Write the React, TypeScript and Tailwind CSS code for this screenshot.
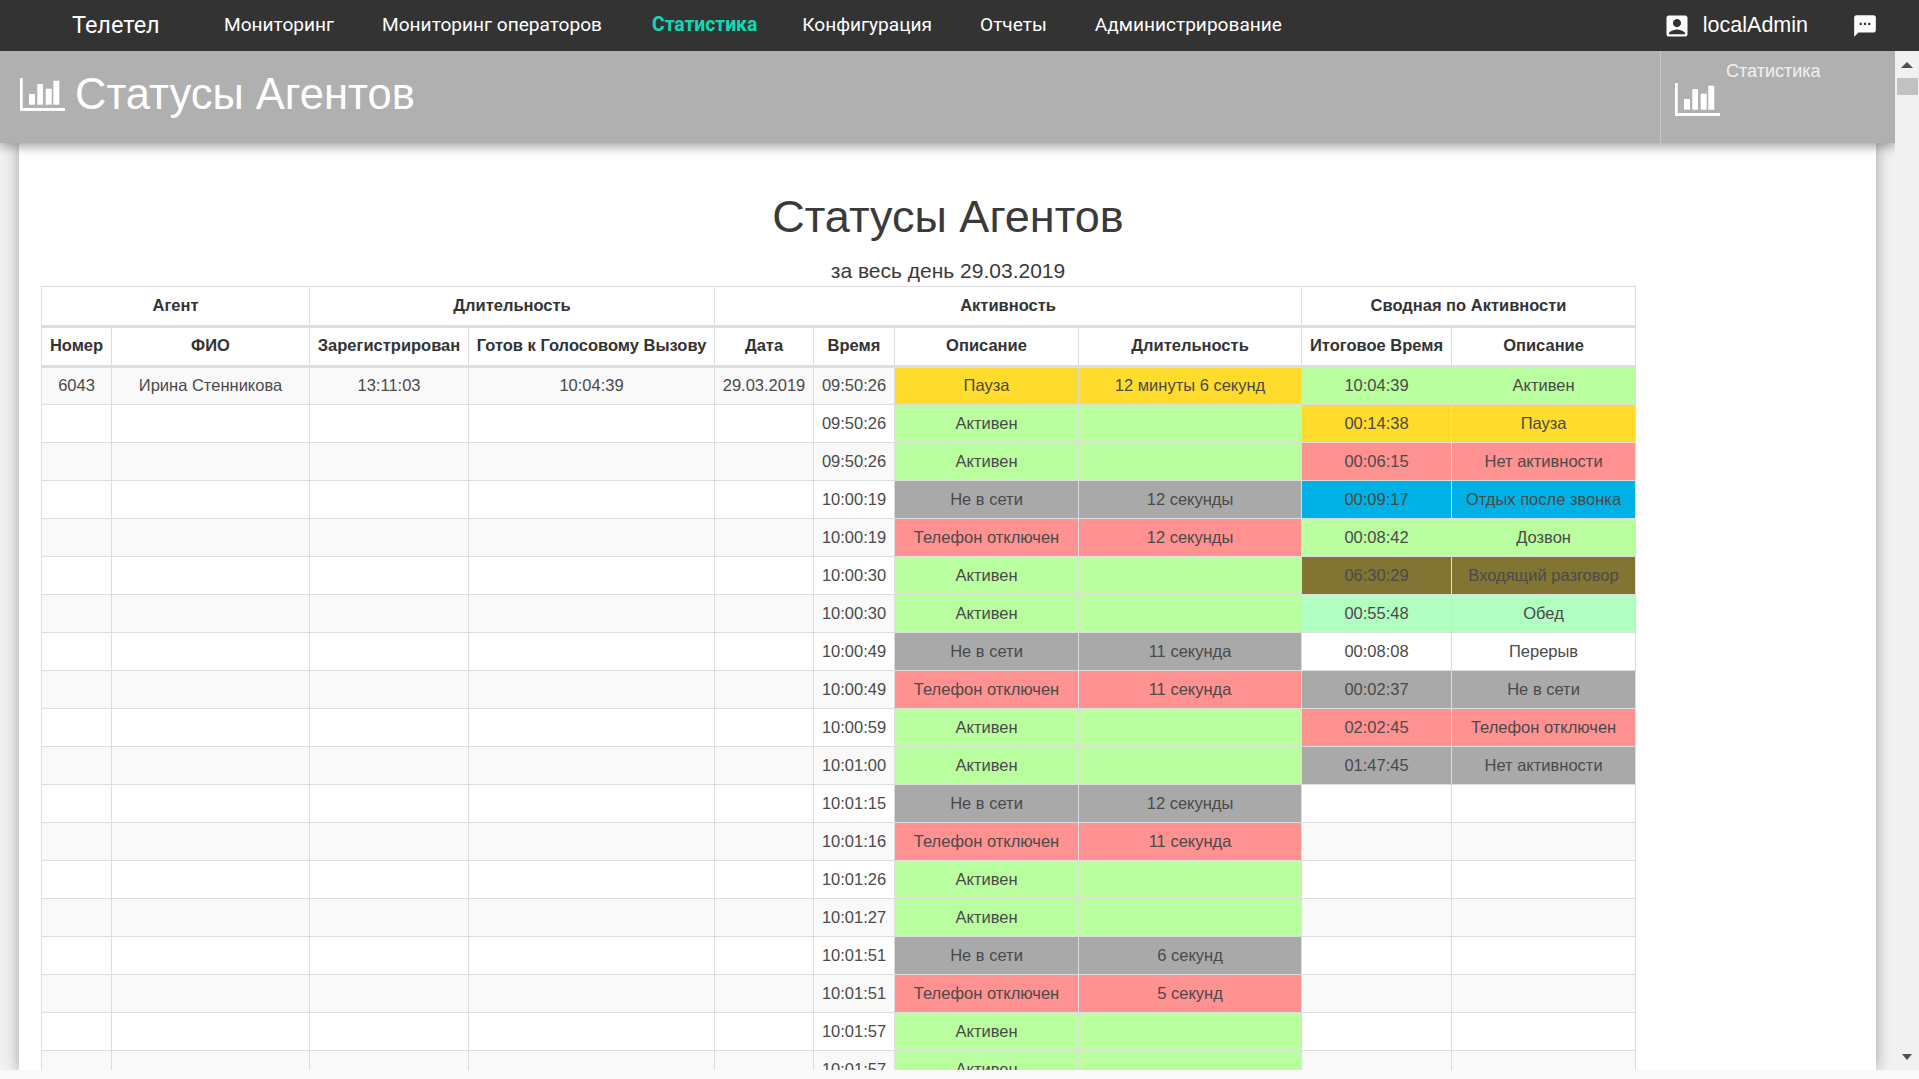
import React from 'react';
import { MdAccountBox, MdSms } from 'react-icons/md';

const NAV = [
  { label: 'Мониторинг' },
  { label: 'Мониторинг операторов' },
  { label: 'Статистика', active: true },
  { label: 'Конфигурация' },
  { label: 'Отчеты' },
  { label: 'Администрирование' },
];

const YELLOW = 'bg-[#ffdc2b]';
const GREEN = 'bg-[#b9ff9f]';
const RED = 'bg-[#ff9191]';
const GREY = 'bg-[#a9a9a9]';
const BLUE = 'bg-[#00b1e6]';
const OLIVE = 'bg-[#827433]';
const MINT = 'bg-[#b2ffc2]';

const ACTIVE = { desc: 'Активен', dur: '', color: GREEN };
const offline = (dur: string) => ({ desc: 'Не в сети', dur, color: GREY });
const phoneOff = (dur: string) => ({ desc: 'Телефон отключен', dur, color: RED });

const ROWS = [
  { time: '09:50:26', desc: 'Пауза', dur: '12 минуты 6 секунд', color: YELLOW },
  { time: '09:50:26', ...ACTIVE },
  { time: '09:50:26', ...ACTIVE },
  { time: '10:00:19', ...offline('12 секунды') },
  { time: '10:00:19', ...phoneOff('12 секунды') },
  { time: '10:00:30', ...ACTIVE },
  { time: '10:00:30', ...ACTIVE },
  { time: '10:00:49', ...offline('11 секунда') },
  { time: '10:00:49', ...phoneOff('11 секунда') },
  { time: '10:00:59', ...ACTIVE },
  { time: '10:01:00', ...ACTIVE },
  { time: '10:01:15', ...offline('12 секунды') },
  { time: '10:01:16', ...phoneOff('11 секунда') },
  { time: '10:01:26', ...ACTIVE },
  { time: '10:01:27', ...ACTIVE },
  { time: '10:01:51', ...offline('6 секунд') },
  { time: '10:01:51', ...phoneOff('5 секунд') },
  { time: '10:01:57', ...ACTIVE },
  { time: '10:01:57', ...ACTIVE },
];

const SUMMARY = [
  { time: '10:04:39', desc: 'Активен', color: GREEN },
  { time: '00:14:38', desc: 'Пауза', color: YELLOW },
  { time: '00:06:15', desc: 'Нет активности', color: RED },
  { time: '00:09:17', desc: 'Отдых после звонка', color: BLUE },
  { time: '00:08:42', desc: 'Дозвон', color: GREEN },
  { time: '06:30:29', desc: 'Входящий разговор', color: OLIVE },
  { time: '00:55:48', desc: 'Обед', color: MINT },
  { time: '00:08:08', desc: 'Перерыв', color: '' },
  { time: '00:02:37', desc: 'Не в сети', color: GREY },
  { time: '02:02:45', desc: 'Телефон отключен', color: RED },
  { time: '01:47:45', desc: 'Нет активности', color: GREY },
];

function BarsIcon() {
  return (
    <svg width="45" height="33" viewBox="0 0 45 33" fill="currentColor" className="shrink-0">
      <path d="M0 0h2.7v30H45v3H0z" />
      <rect x="9" y="16" width="6" height="10.7" />
      <rect x="17.3" y="6" width="5.7" height="20.7" />
      <rect x="25.7" y="10.7" width="6" height="16" />
      <rect x="33.3" y="2.7" width="6" height="24" />
    </svg>
  );
}

const cell = 'border border-[#ddd] p-0 text-center align-middle whitespace-nowrap';
const headCell = 'border border-[#ddd] border-b-[3px] p-0 pb-[2px] text-center align-middle whitespace-nowrap font-bold';

export default function App() {
  return (
    <div className="h-screen flex flex-col overflow-hidden bg-[#f9f9f9] font-['Liberation_Sans',Arial,sans-serif]">
      <header className="h-[51px] shrink-0 bg-[#333333] flex items-center text-white font-['Roboto',sans-serif] relative z-20">
        <div className="ml-[72px] w-[152px] text-[23.5px]">Телетел</div>
        <nav className="flex gap-[48px] text-[19.1px]">
          {NAV.map((item) => (
            <span
              key={item.label}
              className={item.active ? 'ml-[2px] mr-[-3px] font-bold text-[19.3px] text-[#12d9b5]' : ''}
            >
              {item.label}
            </span>
          ))}
        </nav>
        <div className="ml-auto flex items-center mr-[41px]">
          <MdAccountBox className="w-[28px] h-[28px]" />
          <span className="ml-[12px] text-[21.5px] font-['Liberation_Sans',Arial,sans-serif]">localAdmin</span>
          <MdSms className="ml-[44px] w-[26px] h-[26px]" />
        </div>
      </header>

      <div className="flex-1 min-h-0 flex">
        <div className="flex-1 min-w-0 flex flex-col">
          <div className="h-[92px] shrink-0 bg-[#b0b0b0] flex text-white relative z-10 shadow-[0_4px_10px_rgba(0,0,0,0.35)]">
            <div className="flex-1 flex items-center pl-[20px] pb-[6px]">
              <BarsIcon />
              <h1 className="ml-[10px] pt-[2px] text-[43.5px] leading-none">Статусы Агентов</h1>
            </div>
            <div className="w-[235px] border-l border-[#c6c6c6] pl-[14px] pt-[10px]">
              <div className="pl-[51px] text-[18px] leading-[20px] text-[#f0f0f0]">Статистика</div>
              <div className="mt-[2px]">
                <BarsIcon />
              </div>
            </div>
          </div>

          <div className="flex-1 min-h-0 px-[19px] bg-[#f1f1f1]">
            <div className="h-full overflow-hidden bg-white pl-[22px] pt-[50px] shadow-[0_0_14px_rgba(0,0,0,0.35)] text-[#4a4a4a]">
              <div className="w-[1814px] text-center text-[#3a3a3a]">
                <h2 className="text-[45px] leading-[48px]">Статусы Агентов</h2>
                <p className="mt-[17px] text-[21px] leading-[26px]">за весь день 29.03.2019</p>
              </div>
              <table className="mt-[2px] w-[1594px] table-fixed border-collapse text-[16.5px]">
                <colgroup>
                  <col className="w-[70px]" />
                  <col className="w-[198px]" />
                  <col className="w-[159px]" />
                  <col className="w-[246px]" />
                  <col className="w-[99px]" />
                  <col className="w-[81px]" />
                  <col className="w-[184px]" />
                  <col className="w-[223px]" />
                  <col className="w-[150px]" />
                  <col className="w-[184px]" />
                </colgroup>
                <thead className="text-[#333]">
                  <tr className="h-[40px]">
                    <th colSpan={2} className={headCell}>Агент</th>
                    <th colSpan={2} className={headCell}>Длительность</th>
                    <th colSpan={4} className={headCell}>Активность</th>
                    <th colSpan={2} className={headCell}>Сводная по Активности</th>
                  </tr>
                  <tr className="h-[40px]">
                    {['Номер', 'ФИО', 'Зарегистрирован', 'Готов к Голосовому Вызову', 'Дата', 'Время', 'Описание', 'Длительность', 'Итоговое Время', 'Описание'].map((h, i) => (
                      <th key={i} className={headCell}>{h}</th>
                    ))}
                  </tr>
                </thead>
                <tbody>
                  {ROWS.map((row, i) => {
                    const first = i === 0;
                    const sum = SUMMARY[i];
                    const td = first ? `${cell} pb-[2px]` : cell;
                    return (
                      <tr key={i} className={`h-[38px] ${i % 2 === 0 ? 'bg-[#f9f9f9]' : 'bg-white'}`}>
                        <td className={td}>{first ? '6043' : ''}</td>
                        <td className={td}>{first ? 'Ирина Стенникова' : ''}</td>
                        <td className={td}>{first ? '13:11:03' : ''}</td>
                        <td className={td}>{first ? '10:04:39' : ''}</td>
                        <td className={td}>{first ? '29.03.2019' : ''}</td>
                        <td className={td}>{row.time}</td>
                        <td className={`${td} ${row.color}`}>{row.desc}</td>
                        <td className={`${td} ${row.color}`}>{row.dur}</td>
                        <td className={`${td} ${sum?.color ?? ''}`}>{sum?.time}</td>
                        <td className={`${td} ${sum?.color ?? ''}`}>{sum?.desc}</td>
                      </tr>
                    );
                  })}
                </tbody>
              </table>
            </div>
          </div>
        </div>

        <div className="w-[24px] shrink-0 bg-[#f1f1f1] flex flex-col items-center relative z-20">
          <div className="mt-[11px] w-0 h-0 border-x-[6px] border-x-transparent border-b-[6px] border-b-[#505050]" />
          <div className="mt-[10px] w-[21px] h-[17px] bg-[#c1c1c1]" />
          <div className="mt-auto mb-[10px] w-0 h-0 border-x-[5px] border-x-transparent border-t-[6px] border-t-[#505050]" />
        </div>
      </div>

      <div className="h-[9px] shrink-0 bg-[#f9f9f9] relative z-20" />
    </div>
  );
}
